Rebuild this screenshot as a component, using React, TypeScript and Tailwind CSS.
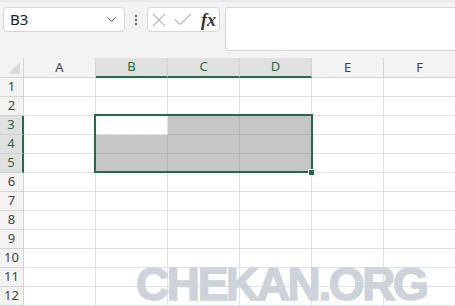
import { ChevronDown } from "lucide-react";

const cols = ["A", "B", "C", "D", "E", "F"];
const rows = [1, 2, 3, 4, 5, 6, 7, 8, 9, 10, 11, 12];

const isSelCol = (c: string) => c === "B" || c === "C" || c === "D";
const isSelRow = (r: number) => r >= 3 && r <= 5;

function Toolbar() {
  return (
    <div className="h-[58px] bg-[#f3f3f3] flex items-start pt-[7px] pl-[3px] border-t-[2px] border-[#e9e9e9]">
      <div className="w-[122px] h-[25px] bg-white border border-[#d6d6d6] rounded-[4px] flex items-center justify-between pl-[6px] pr-[5px] -mt-[2px]">
        <span className="text-[15px] text-[#222]">B3</span>
        <ChevronDown size={15} strokeWidth={1.6} className="text-[#444]" />
      </div>
      <div className="w-[22px] h-[25px] -mt-[2px] flex flex-col items-center justify-center gap-[2px]">
        <span className="w-[2px] h-[2px] bg-[#333] rounded-full" />
        <span className="w-[2px] h-[2px] bg-[#333] rounded-full" />
        <span className="w-[2px] h-[2px] bg-[#333] rounded-full" />
      </div>
      <div className="w-[73px] h-[25px] -mt-[2px] bg-white border border-[#d6d6d6] rounded-[4px] flex items-center pl-[4px] pr-[3px]">
        <svg width="14" height="14" viewBox="0 0 14 14" fill="none" stroke="#bcbcbc" strokeWidth="1.1">
          <path d="M1 1 L13 13 M13 1 L1 13" />
        </svg>
        <svg width="18" height="13" viewBox="0 0 18 13" fill="none" stroke="#bcbcbc" strokeWidth="1.1" className="ml-[8px]">
          <path d="M1 6.5 L6 11.5 L17 1" />
        </svg>
        <span className="ml-auto text-[18px] font-bold italic text-[#333] leading-none [font-family:'Liberation_Serif',serif]">
          fx
        </span>
      </div>
      <div className="ml-[5px] -mt-[2px] flex-1 h-[44px] bg-white border border-[#d6d6d6] rounded-l-[4px] border-r-0" />
    </div>
  );
}

function Grid() {
  return (
    <div className="grid grid-cols-[24px_repeat(6,72px)] grid-rows-[20px_repeat(12,19px)]">
      <div className="bg-[#f3f3f3] border-r border-b border-[#d4d4d4] relative">
        <div className="absolute right-[3px] bottom-[3px] w-0 h-0 border-l-[12px] border-l-transparent border-b-[12px] border-b-[#dadada]" />
      </div>
      {cols.map((c) => (
        <div
          key={c}
          className={
            isSelCol(c)
              ? "bg-[#e0e0e0] border-r border-[#d0d0d0] border-b-[2px] border-b-[#1e6e42] flex items-center justify-center text-[13px] text-[#1e6e42]"
              : "bg-[#f3f3f3] border-r border-b border-[#d4d4d4] flex items-center justify-center text-[13px] text-[#444]"
          }
        >
          {c}
        </div>
      ))}
      {rows.map((r) => (
        <Row key={r} r={r} />
      ))}
    </div>
  );
}

function Row({ r }: { r: number }) {
  return (
    <>
      <div
        className={
          isSelRow(r)
            ? "bg-[#e0e0e0] border-b border-[#d0d0d0] border-r-[2px] border-r-[#1e6e42] flex items-center justify-center text-[13px] text-[#1e6e42]"
            : "bg-[#f3f3f3] border-b border-r border-[#d4d4d4] flex items-center justify-center text-[13px] text-[#444]"
        }
      >
        {r}
      </div>
      {cols.map((c) => {
        const filled = isSelRow(r) && isSelCol(c) && !(r === 3 && c === "B");
        return (
          <div
            key={c}
            className={
              filled
                ? "bg-[#c6c6c6] border-r border-b border-[#b2b2b2]"
                : "bg-white border-r border-b border-[#e1e1e1]"
            }
          />
        );
      })}
    </>
  );
}

export default function App() {
  return (
    <div className="w-[455px] h-[306px] overflow-hidden bg-white relative [font-family:'Noto_Sans','Liberation_Sans',sans-serif]">
      <Toolbar />
      <Grid />
      {/* selection outline */}
      <div className="absolute left-[94px] top-[114px] w-[219px] h-[59px] border-[2px] border-[#1e6e42]" />
      <div className="absolute left-[308px] top-[169px] w-[7px] h-[7px] bg-[#1e6e42] border border-white" />
      {/* watermark */}
      <div className="absolute left-[136px] top-[264px] text-[46px] leading-[40px] font-bold tracking-[-2.4px] text-[#cdd3da] [-webkit-text-stroke:1.5px_#cdd3da] [font-family:'Liberation_Sans',sans-serif] select-none">
        CHEKAN.ORG
      </div>
    </div>
  );
}
